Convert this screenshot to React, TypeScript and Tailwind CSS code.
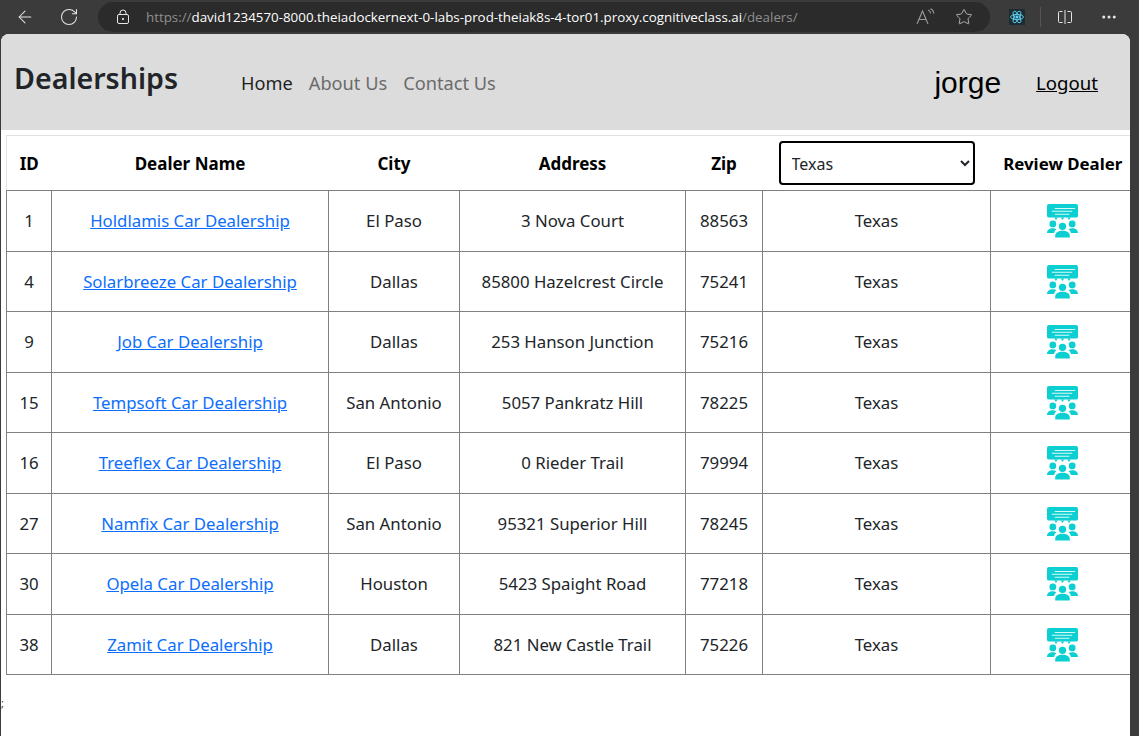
import { ArrowLeft, RotateCw, Star, MoreHorizontal } from 'lucide-react';

const dealers = [
  { id: 1, name: 'Holdlamis Car Dealership', city: 'El Paso', address: '3 Nova Court', zip: '88563' },
  { id: 4, name: 'Solarbreeze Car Dealership', city: 'Dallas', address: '85800 Hazelcrest Circle', zip: '75241' },
  { id: 9, name: 'Job Car Dealership', city: 'Dallas', address: '253 Hanson Junction', zip: '75216' },
  { id: 15, name: 'Tempsoft Car Dealership', city: 'San Antonio', address: '5057 Pankratz Hill', zip: '78225' },
  { id: 16, name: 'Treeflex Car Dealership', city: 'El Paso', address: '0 Rieder Trail', zip: '79994' },
  { id: 27, name: 'Namfix Car Dealership', city: 'San Antonio', address: '95321 Superior Hill', zip: '78245' },
  { id: 30, name: 'Opela Car Dealership', city: 'Houston', address: '5423 Spaight Road', zip: '77218' },
  { id: 38, name: 'Zamit Car Dealership', city: 'Dallas', address: '821 New Castle Trail', zip: '75226' },
];

function ReviewIcon() {
  return (
    <svg width="31" height="34" viewBox="0 0 32 35" className="mx-auto mt-[1px] block text-[#0ccfd2]" fill="currentColor">
      <path d="M2 0h28a2 2 0 0 1 2 2v10a2 2 0 0 1-2 2H2a2 2 0 0 1-2-2V2a2 2 0 0 1 2-2z" />
      <path d="M7.500 14h3.500l-1.750 2.500zM14.250 14h3.500L16 16.500zM21 14h3.500l-1.750 2.500z" />
      <path d="M8 4h21v1H8zM5 7h21v1H5zM8 10h15v1H8z" fill="#ffffff" opacity="0.85" />
      <circle cx="6" cy="20.500" r="3.500" />
      <circle cx="26" cy="20.500" r="3.500" />
      <circle cx="16" cy="23" r="3.800" />
      <path d="M0 30c0-3.300 2.500-5 6-5 1.500 0 2.800.3 3.800.9-1.500 1-2.300 2.400-2.500 4.100z" />
      <path d="M32 30c0-3.300-2.500-5-6-5-1.500 0-2.800.3-3.800.9 1.500 1 2.300 2.400 2.500 4.100z" />
      <path d="M8.500 34.500v-2c0-3.300 3.200-5 7.500-5s7.500 1.700 7.500 5v2z" />
    </svg>
  );
}

function BrowserBar() {
  return (
    <div className="flex h-[34px] items-center bg-[#3b3b3b] text-[#e6e6e6]">
      <ArrowLeft size={20} strokeWidth={1.25} className="ml-[15px]" />
      <RotateCw size={20} strokeWidth={1.25} className="ml-[24px]" />
      <div className="ml-[19px] flex h-[30px] w-[892px] items-center rounded-full bg-[#2b2b2b] font-['Open_Sans',sans-serif] text-[13.35px]">
        <svg width="14" height="16" viewBox="0 0 14 16" fill="none" stroke="currentColor" className="ml-[18px]">
          <rect x="1.500" y="5.500" width="11" height="9" rx="1.500" />
          <path d="M4 5.500V4a3 3 0 0 1 6 0v1.500" />
          <circle cx="7" cy="10" r="0.700" fill="currentColor" />
        </svg>
        <span className="ml-[16px] whitespace-nowrap text-[#8f8f8f]">
          https://<span className="text-white">david1234570-8000.theiadockernext-0-labs-prod-theiak8s-4-tor01.proxy.cognitiveclass.ai</span>/dealers/
        </span>
        <svg width="22" height="18" viewBox="0 0 22 18" fill="none" stroke="#9a9a9a" strokeWidth="1.100" className="ml-auto">
          <path d="M2 16 7.500 3 13 16M4 11.500h7" />
          <path d="M13 2c1.500.5 2.500 1.800 2.600 3.500M15.500 0.800c2 .8 3.200 2.600 3.300 4.700" />
        </svg>
        <Star size={18} strokeWidth={1.2} className="ml-[18px] mr-[17px] text-[#bdbdbd]" />
      </div>
      <div className="ml-[19px] flex h-[16px] w-[16px] items-center justify-center bg-[#1d2b33]">
        <svg width="14" height="14" viewBox="-12 -12 24 24" fill="none" stroke="#61dafb" strokeWidth="1.500">
          <circle r="2" fill="#61dafb" />
          <ellipse rx="11" ry="4.500" />
          <ellipse rx="11" ry="4.500" transform="rotate(60)" />
          <ellipse rx="11" ry="4.500" transform="rotate(120)" />
        </svg>
      </div>
      <div className="ml-[15px] h-[20px] w-px bg-[#555555]" />
      <svg width="16" height="16" viewBox="0 0 16 16" fill="none" stroke="currentColor" className="ml-[16px]">
        <path d="M5.500 2.500h-3a1 1 0 0 0-1 1v9a1 1 0 0 0 1 1h3M10.500 2.500h3a1 1 0 0 1 1 1v9a1 1 0 0 1-1 1h-3M8 1v14" />
      </svg>
      <MoreHorizontal size={18} className="ml-[27px]" />
    </div>
  );
}

export default function App() {
  return (
    <div className="relative h-[736px] w-[1139px] overflow-hidden bg-[#3b3b3b] font-['Noto_Sans',sans-serif]">
      <BrowserBar />
      <div className="ml-px mr-[9px] h-[702px] overflow-hidden rounded-t-[8px] bg-white">
        <nav className="flex h-[96px] items-center bg-[#dcdcdc] text-black">
          <span className="ml-[13px] -mt-[8px] text-[28.6px] font-semibold leading-none text-[#212529]">Dealerships</span>
          <ul className="ml-[63px] mt-[3px] flex gap-4 text-[18.2px]">
            <li className="text-[#1f1f1f]">Home</li>
            <li className="text-[#6b6b6b]">About Us</li>
            <li className="text-[#6b6b6b]">Contact Us</li>
          </ul>
          <span className="ml-auto font-['Liberation_Sans',sans-serif] text-[30px]">jorge</span>
          <a className="ml-[35px] mr-[32px] mt-[2px] text-[18.6px] text-black underline">Logout</a>
        </nav>
        <div className="pl-[5px] pt-[5px]">
          <table className="w-[1129px] table-fixed border-collapse text-center text-[16.8px] text-[#212529]">
            <colgroup>
              <col className="w-[45px]" />
              <col className="w-[277px]" />
              <col className="w-[131px]" />
              <col className="w-[226px]" />
              <col className="w-[77px]" />
              <col className="w-[228px]" />
              <col className="w-[145px]" />
            </colgroup>
            <thead>
              <tr className="h-[55px] border border-[#dee2e6] border-b-[#808080] text-[17px] text-black">
                <th className="pt-[2px]">ID</th>
                <th className="pt-[2px]">Dealer Name</th>
                <th className="pt-[2px]">City</th>
                <th className="pt-[2px]">Address</th>
                <th className="pt-[2px]">Zip</th>
                <th className="px-4">
                  <select className="h-[44px] w-full rounded-[4px] border-2 border-black bg-white pb-[0px] pl-[7px] pt-[1px] text-[16px] font-normal text-[#212529]">
                    <option>Texas</option>
                  </select>
                </th>
                <th className="whitespace-nowrap pt-[1px] text-[16.85px]">Review Dealer</th>
              </tr>
            </thead>
            <tbody>
              {dealers.map((d) => (
                <tr key={d.id} className="h-[60.5px]">
                  <td className="border border-[#808080]">{d.id}</td>
                  <td className="border border-[#808080]">
                    <a className="text-[#0d6efd] underline">{d.name}</a>
                  </td>
                  <td className="border border-[#808080]">{d.city}</td>
                  <td className="border border-[#808080]">{d.address}</td>
                  <td className="border border-[#808080]">{d.zip}</td>
                  <td className="border border-[#808080]">Texas</td>
                  <td className="border border-[#808080] pr-[2px]"><ReviewIcon /></td>
                </tr>
              ))}
            </tbody>
          </table>
        </div>
      </div>
      <span className="absolute left-[1px] top-[697px] text-[11px] leading-none text-[#3d3d6a]">;</span>
    </div>
  );
}
